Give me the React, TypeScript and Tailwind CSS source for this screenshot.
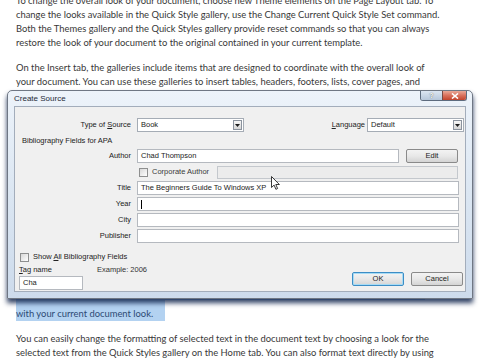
import React from "react";

// Word document behind the dialog — lines kept as they wrap in the shot
const intro = [
  "To change the overall look of your document, choose new Theme elements on the Page Layout tab. To",
  "change the looks available in the Quick Style gallery, use the Change Current Quick Style Set command.",
  "Both the Themes gallery and the Quick Styles gallery provide reset commands so that you can always",
  "restore the look of your document to the original contained in your current template.",
];

const insert = [
  "On the Insert tab, the galleries include items that are designed to coordinate with the overall look of",
  "your document. You can use these galleries to insert tables, headers, footers, lists, cover pages, and",
  "other document building blocks. When you create pictures, charts, or diagrams, they also coordinate",
  "with your current document look.",
];

const outro = [
  "You can easily change the formatting of selected text in the document text by choosing a look for the",
  "selected text from the Quick Styles gallery on the Home tab. You can also format text directly by using",
];

function Lines({ lines }: { lines: string[] }) {
  return (
    <>
      {lines.map((l, i) => (
        <div key={i} className="h-[14px] whitespace-nowrap leading-[14px]">
          {l}
        </div>
      ))}
    </>
  );
}

function Arrow() {
  return (
    <svg width="5" height="3" viewBox="0 0 5 3">
      <path d="M0 0h5L2.5 3z" fill="#1a1a1a" />
    </svg>
  );
}

function Combo({ value, width }: { value: string; width: string }) {
  return (
    <div className={"flex h-[14px] items-center border border-[#a5acb5] bg-white " + width}>
      <span className="flex-1 pl-[3px]">{value}</span>
      <span className="mr-[1px] flex h-[10px] w-[9px] items-center justify-center border border-[#8b939e] bg-gradient-to-b from-[#f6f6f6] to-[#d6d6d6]">
        <Arrow />
      </span>
    </div>
  );
}

function Field({ label, value, caret }: { label: string; value?: string; caret?: boolean }) {
  return (
    <div className="mt-[2px] flex h-[14px] items-center">
      <span className="w-[116px] text-right">{label}</span>
      <div className="ml-[6px] flex h-[14px] w-[322px] items-center border border-[#b5b9bf] bg-white pl-[3px]">
        {caret && <span className="h-[9px] w-px bg-black" />}
        {value}
      </div>
    </div>
  );
}

function Check() {
  return <span className="block h-[9px] w-[9px] border border-[#8e8f8f] bg-gradient-to-br from-[#d8d8d8] to-white" />;
}

function Button({ label, primary }: { label: string; primary?: boolean }) {
  return (
    <div
      className={
        "flex h-[14px] w-[52px] items-center justify-center rounded-[2px] border bg-gradient-to-b from-[#f3f3f3] via-[#e8e8e8] to-[#d4d4d4] " +
        (primary ? "border-[#3c8dc5] shadow-[inset_0_0_0_1px_#a6dbf5]" : "border-[#8a8a8a]")
      }
    >
      {label}
    </div>
  );
}

function CreateSource() {
  return (
    <div className="absolute left-[7px] top-[90px] flex h-[209px] w-[466px] flex-col rounded-t-[5px] border border-[#6f7784] bg-gradient-to-b from-[#edf3fa] via-[#dbe6f2] to-[#cddbec] font-['Liberation_Sans',Arial,sans-serif] shadow-[0_4px_5px_rgba(15,35,75,0.85)]">
      {/* title bar */}
      <div className="flex h-[15px] items-start">
        <span className="pl-[6px] pt-[4px] text-[8px] leading-none text-[#1f2a38]">Create Source</span>
        <div className="ml-auto mr-[5px] flex h-[10px] overflow-hidden rounded-b-[3px] border border-t-0 border-[#5d6b7e]">
          <span className="flex w-[21px] items-center justify-center bg-gradient-to-b from-[#dce6f2] to-[#b6c6da] text-[7px] font-bold leading-none text-[#fff] [text-shadow:0_0_1px_#333]">
            ?
          </span>
          <span className="flex w-[24px] items-center justify-center border-l border-[#7a4a44] bg-gradient-to-b from-[#e9a898] via-[#d8705c] to-[#c2432c]">
            <svg width="8" height="6" viewBox="0 0 8 6">
              <path d="M1 0.5l6 5M7 0.5l-6 5" stroke="#fff" strokeWidth="1.6" />
            </svg>
          </span>
        </div>
      </div>

      {/* client area */}
      <div className="mx-[6px] flex h-[186px] flex-col border border-[#a3adbb] bg-[#f0f0f0] pt-[11px] text-[7.5px] leading-[10px] text-[#222]">
        <div className="flex h-[14px] items-center pr-[1px]">
          <span className="w-[116px] text-right">
            Type of <u>S</u>ource
          </span>
          <div className="ml-[6px]">
            <Combo value="Book" width="w-[107px]" />
          </div>
          <span className="ml-auto mr-[2px]">
            <u>L</u>anguage
          </span>
          <Combo value="Default" width="w-[97px]" />
        </div>

        <div className="mt-[3px] flex h-[12px] items-center pl-[7px]">Bibliography Fields for APA</div>

        <div className="mt-[2px] flex h-[14px] items-center">
          <span className="w-[116px] text-right">Author</span>
          <div className="ml-[6px] flex h-[14px] w-[262px] items-center border border-[#b5b9bf] bg-white pl-[3px]">
            Chad Thompson
          </div>
          <div className="ml-[7px]">
            <Button label="Edit" />
          </div>
        </div>

        <div className="mt-[2px] flex h-[14px] items-center">
          <span className="ml-[124px]">
            <Check />
          </span>
          <span className="ml-[4px] text-[#3a3a3a]">Corporate Author</span>
          <div className="ml-auto mr-[7px] h-[13px] w-[241px] border border-[#c4c8cd] bg-[#ececec]" />
        </div>

        <Field label="Title" value="The Beginners Guide To Windows XP" />
        <Field label="Year" caret />
        <Field label="City" />
        <Field label="Publisher" />

        <div className="mt-[9px] flex flex-1 items-end justify-between">
          <div className="flex flex-col pb-[1px] pl-[4px]">
            <div className="flex h-[10px] items-center">
              <span className="ml-px">
                <Check />
              </span>
              <span className="ml-[4px]">
                Show <u>A</u>ll Bibliography Fields
              </span>
            </div>
            <div className="mt-[2px] flex h-[12px] items-center">
              <span className="w-[78px]">
                <u>T</u>ag name
              </span>
              <span className="text-[#333]">Example: 2006</span>
            </div>
            <div className="flex h-[14px] w-[64px] items-center border border-[#b5b9bf] bg-white pl-[3px]">Cha</div>
          </div>
          <div className="mb-[5px] mr-[2px] flex gap-[7px]">
            <Button label="OK" primary />
            <Button label="Cancel" />
          </div>
        </div>
      </div>
    </div>
  );
}

function Pointer() {
  return (
    <svg className="absolute left-[271px] top-[176px]" width="9" height="14" viewBox="0 0 9 14">
      <path d="M0.5 0.5v11l2.6-2.4 1.8 4.2 1.7-0.8-1.8-4h3.6z" fill="#fff" stroke="#222" strokeWidth="0.9" />
    </svg>
  );
}

export default function App() {
  return (
    <div className="relative h-[360px] w-[480px] overflow-hidden bg-white font-['Lato',sans-serif] text-[9.4px] text-[#383838]">
      <div className="-mt-[6px] px-[16px]">
        <Lines lines={intro} />
        <div className="mt-[11px]">
          <Lines lines={insert.slice(0, 2)} />
        </div>
        {/* selected paragraphs, mostly under the dialog */}
        <div className="mt-[11px] w-fit bg-[#b3d2f1] text-[#2d4a74]">
          <Lines lines={insert.slice(2)} />
          <Lines lines={intro} />
        </div>
        <div className="mt-[74px] w-fit bg-[#b3d2f1] text-[#2d4a74]">
          <Lines lines={insert.slice(0, 3)} />
        </div>
        <div className="flex h-[21px] w-[149px] items-end bg-[#b3d2f1] text-[#2d4a74]">
          <Lines lines={insert.slice(3)} />
        </div>
        <div className="mt-[11px]">
          <Lines lines={outro} />
        </div>
      </div>
      <CreateSource />
      <Pointer />
    </div>
  );
}
